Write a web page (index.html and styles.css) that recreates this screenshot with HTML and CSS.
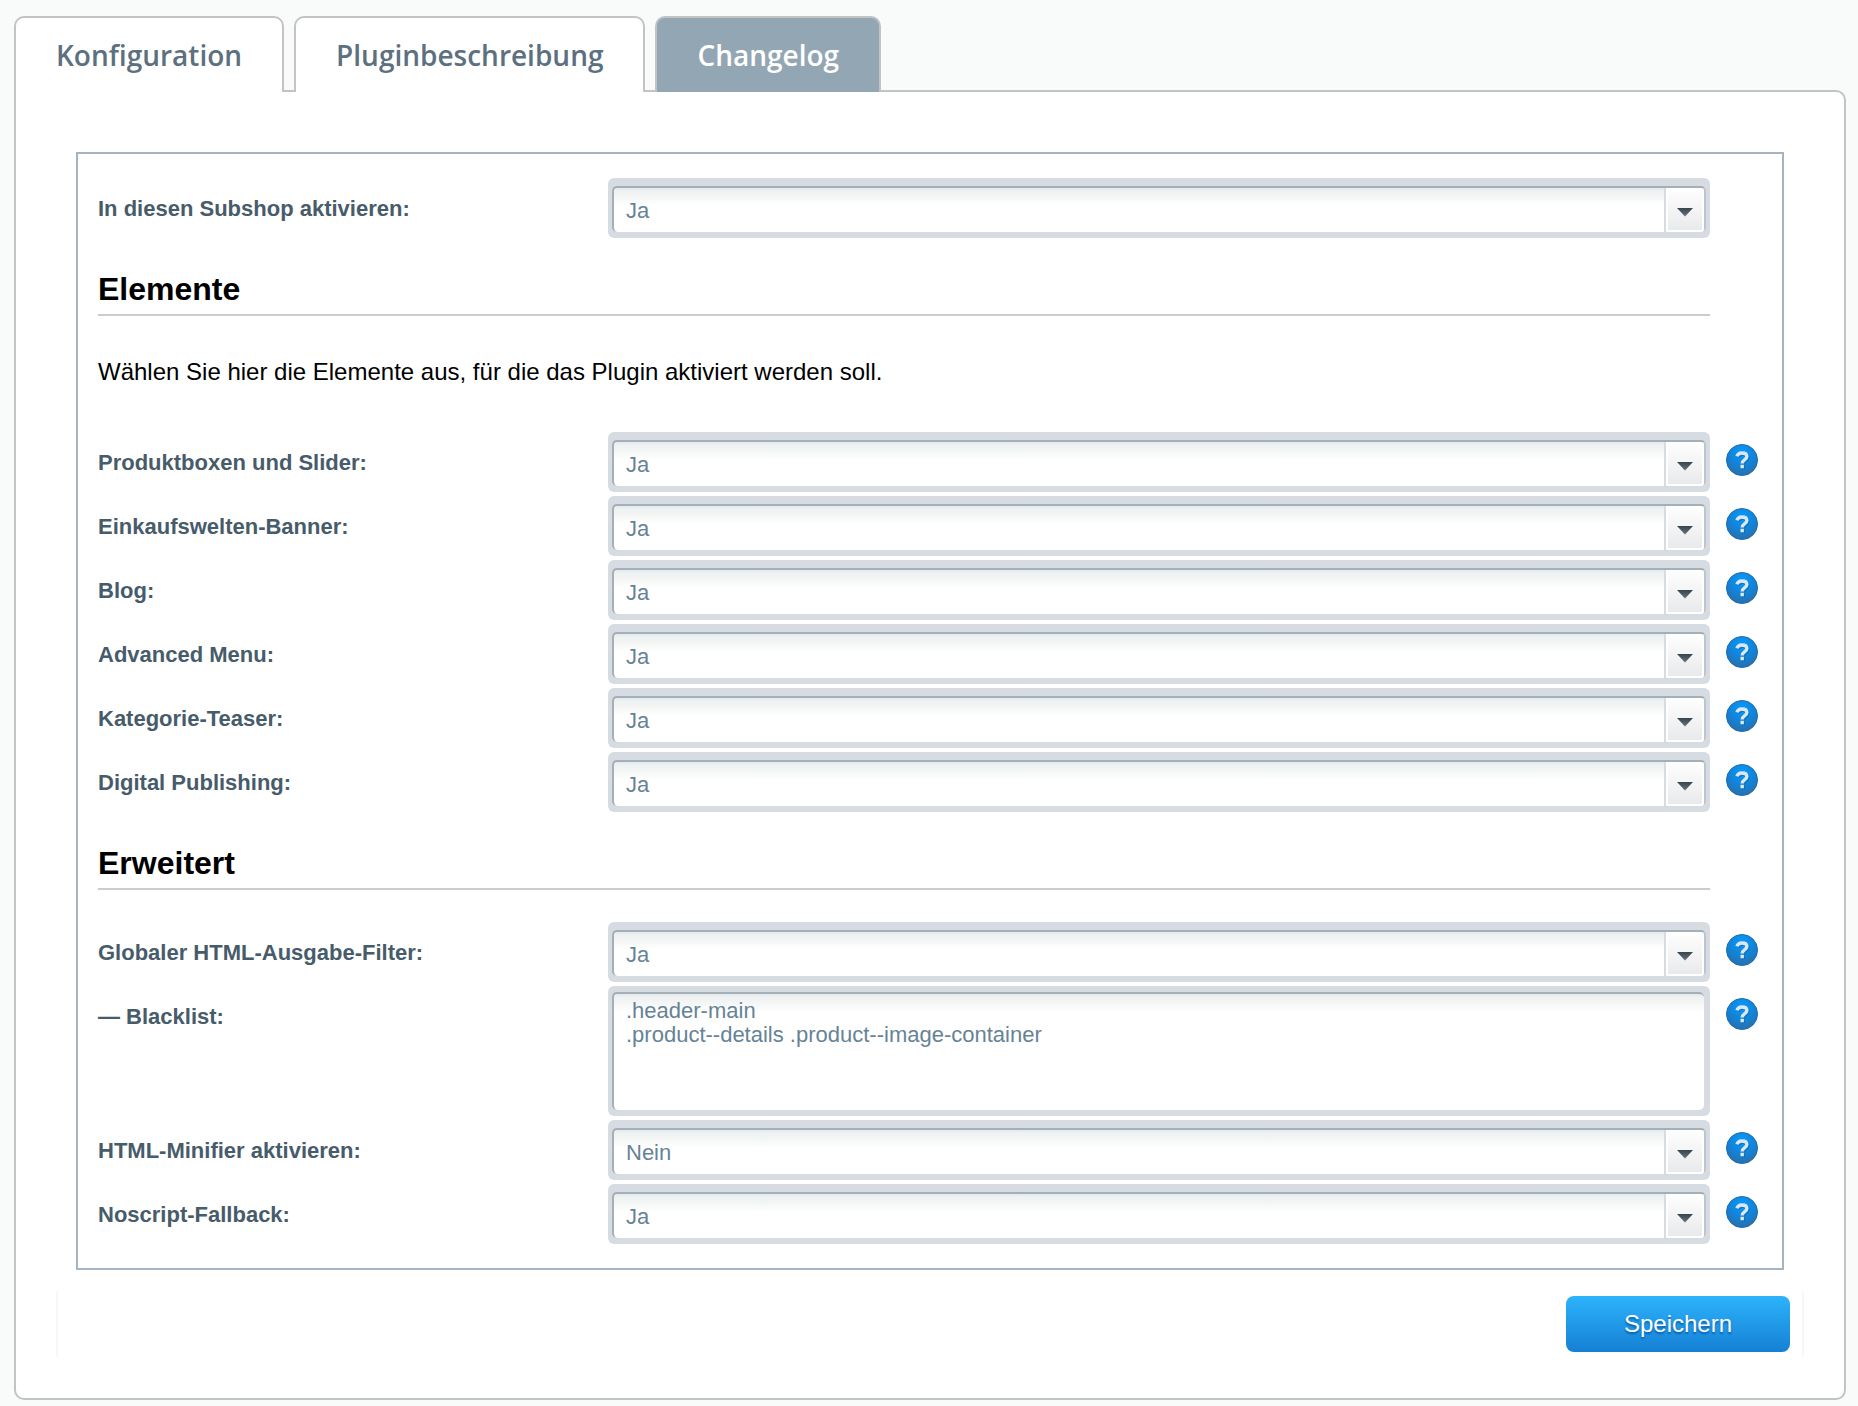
FILE: index.html
```html
<!DOCTYPE html>
<html lang="de">
<head>
<meta charset="utf-8">
<meta name="viewport" content="width=device-width, initial-scale=1">
<title>Plugin-Konfiguration</title>
<link rel="stylesheet" href="styles.css">
</head>
<body>
<svg class="defs" width="0" height="0" aria-hidden="true">
  <defs>
    <radialGradient id="help-fill" cx="0.5" cy="0.25" r="0.75">
      <stop offset="0" stop-color="#0a98fc"/>
      <stop offset="0.5" stop-color="#0f86dc"/>
      <stop offset="1" stop-color="#2a6fae"/>
    </radialGradient>
    <linearGradient id="arrow-fill" x1="0" y1="0" x2="0" y2="1">
      <stop offset="0" stop-color="#38444e"/>
      <stop offset="1" stop-color="#66757f"/>
    </linearGradient>
    <symbol id="help" viewBox="0 0 32 32">
      <circle cx="16" cy="16" r="15.5" fill="url(#help-fill)" stroke="#1a6eb0" stroke-width="1"/>
      <path d="M11 12.400c.6-2.300 2.300-3.400 5-3.400 2.900 0 4.900 1.200 4.900 3.500 0 3.200-4.700 3-4.700 7.100M16.200 20.800v3.400" transform="translate(1 1)" fill="none" stroke="#0b5a9c" stroke-width="3.400" opacity=".5"/>
      <path d="M11 12.400c.6-2.300 2.300-3.400 5-3.400 2.900 0 4.900 1.200 4.900 3.500 0 3.200-4.700 3-4.700 7.100M16.200 20.800v3.400" fill="none" stroke="#d9e9f8" stroke-width="3.400"/>
    </symbol>
    <symbol id="arrow" viewBox="0 0 16 10">
      <path d="M0 1h16L8 9.500z" fill="url(#arrow-fill)"/>
    </symbol>
  </defs>
</svg>

<div class="tabs" role="tablist">
  <button class="tab" type="button" role="tab" aria-selected="true">Konfiguration</button>
  <button class="tab" type="button" role="tab" aria-selected="false">Pluginbeschreibung</button>
  <button class="tab tab-highlight" type="button" role="tab" aria-selected="false">Changelog</button>
</div>

<form class="panel">
  <div class="form-box">
    <div class="row">
      <label class="label" for="subshop">In diesen Subshop aktivieren:</label>
      <div class="field select-field">
        <select class="select" id="subshop"><option selected>Ja</option><option>Nein</option></select>
        <span class="trigger"><svg class="arrow"><use href="#arrow"/></svg></span>
      </div>
    </div>

    <h2 class="heading">Elemente</h2>
    <p class="intro">Wählen Sie hier die Elemente aus, für die das Plugin aktiviert werden soll.</p>

    <div class="row">
      <label class="label" for="boxes">Produktboxen und Slider:</label>
      <div class="field select-field">
        <select class="select" id="boxes"><option selected>Ja</option><option>Nein</option></select>
        <span class="trigger"><svg class="arrow"><use href="#arrow"/></svg></span>
      </div>
      <button class="help" type="button" aria-label="Hilfe"><svg class="help-icon"><use href="#help"/></svg></button>
    </div>
    <div class="row">
      <label class="label" for="banner">Einkaufswelten-Banner:</label>
      <div class="field select-field">
        <select class="select" id="banner"><option selected>Ja</option><option>Nein</option></select>
        <span class="trigger"><svg class="arrow"><use href="#arrow"/></svg></span>
      </div>
      <button class="help" type="button" aria-label="Hilfe"><svg class="help-icon"><use href="#help"/></svg></button>
    </div>
    <div class="row">
      <label class="label" for="blog">Blog:</label>
      <div class="field select-field">
        <select class="select" id="blog"><option selected>Ja</option><option>Nein</option></select>
        <span class="trigger"><svg class="arrow"><use href="#arrow"/></svg></span>
      </div>
      <button class="help" type="button" aria-label="Hilfe"><svg class="help-icon"><use href="#help"/></svg></button>
    </div>
    <div class="row">
      <label class="label" for="menu">Advanced Menu:</label>
      <div class="field select-field">
        <select class="select" id="menu"><option selected>Ja</option><option>Nein</option></select>
        <span class="trigger"><svg class="arrow"><use href="#arrow"/></svg></span>
      </div>
      <button class="help" type="button" aria-label="Hilfe"><svg class="help-icon"><use href="#help"/></svg></button>
    </div>
    <div class="row">
      <label class="label" for="teaser">Kategorie-Teaser:</label>
      <div class="field select-field">
        <select class="select" id="teaser"><option selected>Ja</option><option>Nein</option></select>
        <span class="trigger"><svg class="arrow"><use href="#arrow"/></svg></span>
      </div>
      <button class="help" type="button" aria-label="Hilfe"><svg class="help-icon"><use href="#help"/></svg></button>
    </div>
    <div class="row">
      <label class="label" for="publishing">Digital Publishing:</label>
      <div class="field select-field">
        <select class="select" id="publishing"><option selected>Ja</option><option>Nein</option></select>
        <span class="trigger"><svg class="arrow"><use href="#arrow"/></svg></span>
      </div>
      <button class="help" type="button" aria-label="Hilfe"><svg class="help-icon"><use href="#help"/></svg></button>
    </div>

    <h2 class="heading">Erweitert</h2>

    <div class="row">
      <label class="label" for="filter">Globaler HTML-Ausgabe-Filter:</label>
      <div class="field select-field">
        <select class="select" id="filter"><option selected>Ja</option><option>Nein</option></select>
        <span class="trigger"><svg class="arrow"><use href="#arrow"/></svg></span>
      </div>
      <button class="help" type="button" aria-label="Hilfe"><svg class="help-icon"><use href="#help"/></svg></button>
    </div>
    <div class="row">
      <label class="label" for="blacklist">— Blacklist:</label>
      <div class="field text-field">
        <textarea class="textarea" id="blacklist" spellcheck="false">.header-main
.product--details .product--image-container</textarea>
      </div>
      <button class="help" type="button" aria-label="Hilfe"><svg class="help-icon"><use href="#help"/></svg></button>
    </div>
    <div class="row">
      <label class="label" for="minifier">HTML-Minifier aktivieren:</label>
      <div class="field select-field">
        <select class="select" id="minifier"><option>Ja</option><option selected>Nein</option></select>
        <span class="trigger"><svg class="arrow"><use href="#arrow"/></svg></span>
      </div>
      <button class="help" type="button" aria-label="Hilfe"><svg class="help-icon"><use href="#help"/></svg></button>
    </div>
    <div class="row">
      <label class="label" for="noscript">Noscript-Fallback:</label>
      <div class="field select-field">
        <select class="select" id="noscript"><option selected>Ja</option><option>Nein</option></select>
        <span class="trigger"><svg class="arrow"><use href="#arrow"/></svg></span>
      </div>
      <button class="help" type="button" aria-label="Hilfe"><svg class="help-icon"><use href="#help"/></svg></button>
    </div>
  </div>

  <div class="toolbar">
    <button class="save" type="submit">Speichern</button>
  </div>
</form>
</body>
</html>
```
FILE: styles.css
```css
* {
  box-sizing: border-box;
}

body {
  margin: 0;
  padding: 16px 12px 6px 14px;
  background: #f9fbfa;
  color: #000;
  font-family: "Liberation Sans", Arial, sans-serif;
}

.defs {
  position: absolute;
}

/* Tabs overlap the top border of the panel */
.tabs {
  display: flex;
  gap: 10px;
  margin-bottom: -2px;
  position: relative;
}

.tab {
  padding: 19px 40px;
  border: 2px solid #c3c3c3;
  border-bottom: 0;
  border-radius: 10px 10px 0 0;
  background: #fff;
  color: #5c7080;
  font: 600 28px/36px "Open Sans", sans-serif;
}

.tab-highlight {
  background: #93a6b4;
  color: #fff;
}

.panel {
  padding: 60px 40px 40px;
  border: 2px solid #c3c3c3;
  border-radius: 0 10px 10px 10px;
  background: #fff;
}

.form-box {
  margin: 0 20px;
  padding: 24px 24px 24px 20px;
  border: 2px solid #a4b4c1;
}

.row {
  display: grid;
  grid-template-columns: 494px 1fr 32px;
  column-gap: 16px;
  align-items: start;
}

.row + .row {
  margin-top: 4px;
}

.label {
  padding-top: 19px;
  color: #475c6a;
  font-size: 22px;
  font-weight: 700;
  line-height: 24px;
}

.heading {
  margin: 33px 48px 32px 0;
  padding-bottom: 7px;
  border-bottom: 2px solid #ccc;
  font-size: 32px;
  line-height: 36px;
}

.intro {
  margin: 42px 0 46px;
  font-size: 24px;
  line-height: 28px;
}

.field {
  display: grid;
  border-radius: 6px;
  background: #d7dce3;
}

.select-field {
  padding: 8px 4px 6px;
}

.text-field {
  padding: 6px 6px 6px 4px;
}

.select,
.textarea {
  grid-area: 1 / 1;
  width: 100%;
  margin: 0;
  border: 2px solid #a5afb8;
  border-right-color: #bcc5ce;
  border-bottom: 0;
  border-radius: 5px;
  outline: 0;
  background: linear-gradient(#e3e9eb, #eff2f2 3px, #f3f5f5 8px, #fff 18px);
  color: #668396;
  font: 22px/24px "Liberation Sans", Arial, sans-serif;
}

.select {
  height: 46px;
  padding: 2px 12px 0;
  appearance: none;
}

.textarea {
  display: block;
  height: 118px;
  padding: 5px 12px;
  border-right: 0;
  resize: none;
}

.trigger {
  grid-area: 1 / 1;
  justify-self: end;
  display: flex;
  align-items: center;
  justify-content: center;
  width: 38px;
  height: 44px;
  margin: 2px 2px 0 0;
  padding-top: 6px;
  border: 2px solid #fff;
  border-top: 0;
  border-radius: 0 3px 3px 0;
  background: linear-gradient(#fff, #e9eaec) padding-box;
  box-shadow: -2px 0 #d7dce3;
  pointer-events: none;
}

.arrow {
  width: 16px;
  height: 10px;
}

.help {
  display: block;
  width: 32px;
  height: 32px;
  margin-top: 12px;
  padding: 0;
  border: 0;
  background: none;
}

.help-icon {
  display: block;
  width: 32px;
  height: 32px;
}

.toolbar {
  display: flex;
  justify-content: flex-end;
  margin-top: 20px;
  padding: 6px 12px;
  border: solid #f6f7f7;
  border-width: 0 2px;
  border-radius: 4px;
}

.save {
  width: 224px;
  height: 56px;
  border: 0;
  border-radius: 8px;
  background: linear-gradient(#2db3fb, #1580d4);
  color: #fff;
  font: 24px/28px "Liberation Sans", Arial, sans-serif;
  text-shadow: 0 2px 2px #0b5dab;
}
```
